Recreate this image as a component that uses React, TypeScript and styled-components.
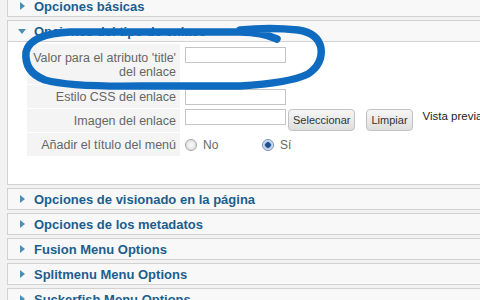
import React from "react";
import styled, { createGlobalStyle } from "styled-components";

const GlobalStyle = createGlobalStyle`
  html, body {
    margin: 0;
    padding: 0;
    background: #f2f2f2;
    overflow: hidden;
  }
`;

const Page = styled.div`
  position: relative;
  width: 480px;
  height: 300px;
  overflow: hidden;
  font-family: "Liberation Sans", Arial, sans-serif;
`;

const Stack = styled.div`
  display: flex;
  flex-direction: column;
  gap: 3px;
  margin-top: -5px;
  padding-left: 7px;
  width: 620px;
`;

const Panel = styled.div`
  border: 1px solid #d2d2d2;
  background: #ffffff;
`;

const Header = styled.div<{ $open?: boolean }>`
  display: flex;
  align-items: center;
  height: 20px;
  padding-left: 12px;
  background: #f8f8f8;
  border-bottom: ${(p) => (p.$open ? "1px solid #d2d2d2" : "none")};
  color: #1b5e8e;
  font-size: 13px;
  font-weight: bold;
`;

const Arrow = styled.span<{ $open?: boolean }>`
  width: 0;
  height: 0;
  margin-right: ${(p) => (p.$open ? "8px" : "9px")};
  ${(p) =>
    p.$open
      ? `border-left: 4px solid transparent;
         border-right: 4px solid transparent;
         border-top: 5px solid #4a8fb5;
         margin-left: -2px;`
      : `border-top: 4px solid transparent;
         border-bottom: 4px solid transparent;
         border-left: 5px solid #4a8fb5;`}
`;

const Body = styled.div`
  height: 142px;
  padding: 2px 0 0 19px;
  box-sizing: border-box;
`;

const Form = styled.div`
  display: grid;
  grid-template-columns: 153px auto;
  grid-template-rows: 40px 23px 23px 23px;
  row-gap: 1px;
`;

const Label = styled.div<{ $top?: number }>`
  background: #f4f4f4;
  color: #666;
  font-size: 12.5px;
  line-height: 14px;
  text-align: right;
  padding: ${(p) => p.$top ?? 0}px 4px 0 0;
  display: flex;
  flex-direction: column;
  justify-content: ${(p) => (p.$top ? "flex-start" : "center")};
  align-items: flex-end;
`;

const Value = styled.div<{ $top?: number; $center?: boolean }>`
  display: flex;
  align-items: ${(p) => (p.$center ? "center" : "flex-start")};
  padding: ${(p) => p.$top ?? 0}px 0 0 5px;
  font-size: 12px;
`;

const TextInput = styled.div`
  width: 101px;
  height: 16px;
  box-sizing: border-box;
  border: 1px solid #c4c4c4;
  background: #fff;
`;

const Button = styled.div<{ $gap?: number }>`
  height: 22px;
  box-sizing: border-box;
  margin-left: ${(p) => p.$gap ?? 0}px;
  padding: 0 4px;
  display: flex;
  align-items: center;
  border: 1px solid #c2c2c2;
  border-radius: 4px;
  background: linear-gradient(#f6f6f6, #dedede);
  color: #333;
  font-size: 11px;
`;

const Preview = styled.span`
  margin-left: 10px;
  margin-top: 1px;
  color: #222;
  font-size: 11.5px;
  white-space: nowrap;
`;

const RadioItem = styled.label<{ $width?: number }>`
  display: flex;
  align-items: center;
  gap: 6px;
  ${(p) => (p.$width ? `width: ${p.$width}px;` : "")}
  color: #666;
  font-size: 12px;
`;

const RadioDot = styled.span<{ $checked?: boolean }>`
  width: 12px;
  height: 12px;
  flex: none;
  box-sizing: border-box;
  border-radius: 50%;
  border: 1px solid ${(p) => (p.$checked ? "#7090b8" : "#a8a8a8")};
  background: ${(p) =>
    p.$checked
      ? "radial-gradient(circle, #1d4f95 0 2.5px, #9fb8d8 3px, #e8eef6 5px)"
      : "radial-gradient(circle, #f4f4f4 0 2px, #d6d6d6 6px)"};
`;

const Overlay = styled.svg`
  position: absolute;
  top: 0;
  left: 0;
  pointer-events: none;
`;

const collapsed = [
  "Opciones de visionado en la página",
  "Opciones de los metadatos",
  "Fusion Menu Options",
  "Splitmenu Menu Options",
  "Suckerfish Menu Options",
];

const App = () => {
  return (
    <Page>
      <GlobalStyle />
      <Stack>
        <Panel>
          <Header>
            <Arrow />
            Opciones básicas
          </Header>
        </Panel>
        <Panel>
          <Header $open>
            <Arrow $open />
            Opciones del tipo de enlace
          </Header>
          <Body>
            <Form>
              <Label $top={7}>
                <span>Valor para el atributo 'title'</span>
                <span>del enlace</span>
              </Label>
              <Value $top={3}>
                <TextInput />
              </Value>
              <Label>Estilo CSS del enlace</Label>
              <Value $top={4}>
                <TextInput />
              </Value>
              <Label>Imagen del enlace</Label>
              <Value>
                <TextInput />
                <Button $gap={2}>Seleccionar</Button>
                <Button $gap={11}>Limpiar</Button>
                <Preview>Vista previa</Preview>
              </Value>
              <Label>Añadir el título del menú</Label>
              <Value $center>
                <RadioItem $width={77}>
                  <RadioDot />
                  No
                </RadioItem>
                <RadioItem>
                  <RadioDot $checked />
                  Sí
                </RadioItem>
              </Value>
            </Form>
          </Body>
        </Panel>
        {collapsed.map((title) => (
          <Panel key={title}>
            <Header>
              <Arrow />
              {title}
            </Header>
          </Panel>
        ))}
      </Stack>
      <Overlay width="480" height="300" viewBox="0 0 480 300">
        <path
          d="M 277 39 Q 262 32 240 32 L 70 32 Q 30 34 26 52 Q 24 72 45 80 Q 70 87 140 86 L 240 86 Q 290 83 308 74 Q 323 64 321 48 Q 318 33 298 30 Q 270 27 240 30"
          fill="none"
          stroke="#0e6bbf"
          strokeWidth="7.5"
          strokeLinecap="round"
          strokeLinejoin="round"
        />
      </Overlay>
    </Page>
  );
};

export default App;
